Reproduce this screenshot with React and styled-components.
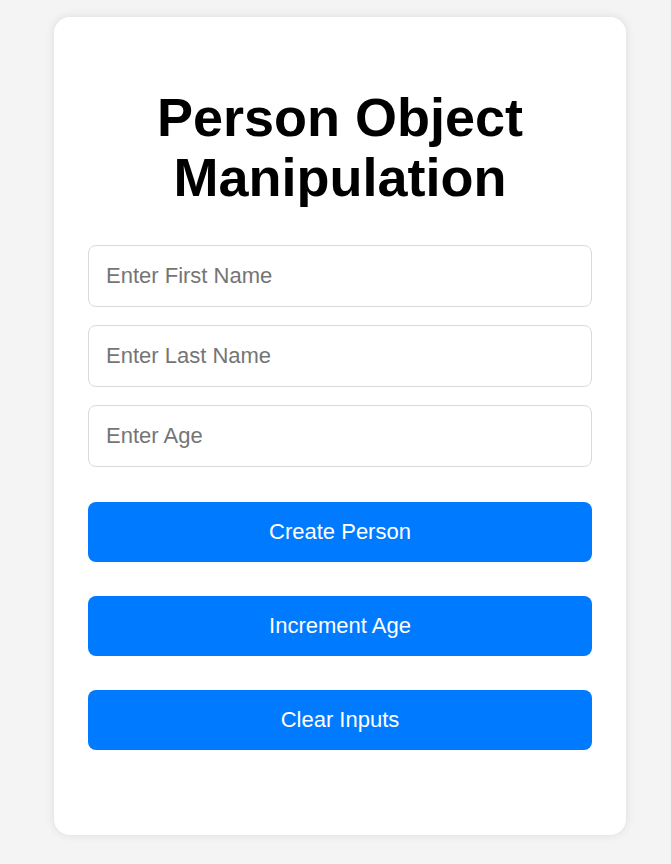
import React, { useState } from 'react';
import styled, { createGlobalStyle } from 'styled-components';

const GlobalStyle = createGlobalStyle`
  html, body {
    margin: 0;
    padding: 0;
    background-color: #f4f4f4;
    font-family: "Liberation Sans", Arial, sans-serif;
  }
`;

const Page = styled.div`
  min-height: 864px;
  padding: 17px 0 29px 54px;
  box-sizing: border-box;
`;

const Card = styled.div`
  width: 572px;
  box-sizing: border-box;
  background-color: #fff;
  border-radius: 16px;
  padding: 34px 34px 85px;
  box-shadow: 0 0 10px rgba(0, 0, 0, 0.1);
`;

const Title = styled.h1`
  margin: 36px 0 38px;
  font-size: 54px;
  font-weight: bold;
  line-height: 60px;
  text-align: center;
  color: #000;
`;

const Form = styled.div`
  display: flex;
  flex-direction: column;
  gap: 18px;
`;

const Input = styled.input`
  height: 62px;
  box-sizing: border-box;
  padding: 0 17px;
  border: 1px solid #dadada;
  border-radius: 8px;
  font-family: inherit;
  font-size: 22px;
  color: #333;
  outline: none;

  &::placeholder {
    color: #757575;
  }
`;

const Actions = styled.div`
  display: flex;
  flex-direction: column;
  gap: 34px;
  margin-top: 35px;
`;

const Button = styled.button`
  height: 60px;
  border: none;
  border-radius: 8px;
  background-color: #007bff;
  color: #fff;
  font-family: inherit;
  font-size: 22px;
  cursor: pointer;
`;

const App = () => {
  const [firstName, setFirstName] = useState('');
  const [lastName, setLastName] = useState('');
  const [age, setAge] = useState('');

  const clearInputs = () => {
    setFirstName('');
    setLastName('');
    setAge('');
  };

  return (
    <Page>
      <GlobalStyle />
      <Card>
        <Title>Person Object Manipulation</Title>
        <Form>
          <Input
            placeholder="Enter First Name"
            value={firstName}
            onChange={e => setFirstName(e.target.value)}
          />
          <Input
            placeholder="Enter Last Name"
            value={lastName}
            onChange={e => setLastName(e.target.value)}
          />
          <Input
            placeholder="Enter Age"
            value={age}
            onChange={e => setAge(e.target.value)}
          />
        </Form>
        <Actions>
          <Button>Create Person</Button>
          <Button onClick={() => setAge(a => (a === '' ? a : String(Number(a) + 1)))}>
            Increment Age
          </Button>
          <Button onClick={clearInputs}>Clear Inputs</Button>
        </Actions>
      </Card>
    </Page>
  );
};

export default App;
